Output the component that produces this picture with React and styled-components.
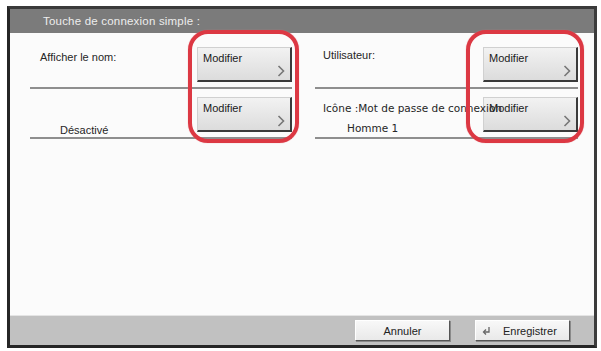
import React from 'react'
import styled, { createGlobalStyle } from 'styled-components'

const GlobalStyle = createGlobalStyle`
  body {
    margin: 0;
    background: #ffffff;
    font-family: "Liberation Sans", Arial, sans-serif;
  }
`

const Page = styled.div`
  width: 601px;
  height: 351px;
  box-sizing: border-box;
  padding: 6px 4px 3px 7px;
`

const Frame = styled.div`
  height: 342px;
  box-sizing: border-box;
  border: 3px solid #262626;
  border-top-color: #3a3a3a;
  border-right-color: #3c3c3c;
  display: flex;
  flex-direction: column;
`

const TitleBar = styled.div`
  height: 24px;
  flex: none;
  background: #7b7b7b;
  color: #ededed;
  font-size: 11.5px;
  letter-spacing: 0.2px;
  line-height: 24px;
  padding-left: 33px;
`

const Content = styled.div`
  flex: 1;
  position: relative;
  background: #fbfbfb;
  display: grid;
  grid-template-columns: 262px 263px;
  column-gap: 23px;
  align-content: start;
  padding-left: 20px;
`

const Column = styled.div`
  display: flex;
  flex-direction: column;
`

const Row = styled.div`
  height: ${(p) => p.$height}px;
  box-sizing: border-box;
  display: flex;
  justify-content: space-between;
  align-items: flex-end;
  padding-bottom: 5px;
  border-bottom: 2px solid #8e8e8e;
`

const TextCell = styled.div`
  align-self: stretch;
  flex: 1;
  min-width: 0;
  position: relative;
  z-index: 1;
  padding-top: ${(p) => p.$top}px;
  padding-left: ${(p) => p.$left}px;
  white-space: nowrap;
`

const Label = styled.div`
  font-size: 11px;
  line-height: 14px;
  height: 14px;
  color: #262626;
`

const AltLabel = styled(Label)`
  font-family: "DejaVu Sans", Verdana, sans-serif;
  font-size: 10.5px;
`

const Value = styled(Label)`
  margin-top: ${(p) => p.$gap}px;
  padding-left: ${(p) => p.$indent}px;
`

const AltValue = styled(AltLabel)`
  margin-top: ${(p) => p.$gap}px;
  padding-left: ${(p) => p.$indent}px;
`

const EditButton = styled.div`
  width: 95px;
  height: 35px;
  flex: none;
  box-sizing: border-box;
  display: flex;
  flex-direction: column;
  justify-content: space-between;
  padding: 4px 5px 3px 5px;
  background: linear-gradient(#f2f2f2, #dcdcdc);
  border-top: 1px solid #d0d0d0;
  border-left: 1px solid #d0d0d0;
  border-right: 2px solid #3a3a3a;
  border-bottom: 2px solid #3a3a3a;
  font-size: 11px;
  color: #1a1a1a;
  svg {
    align-self: flex-end;
  }
`

const Ring = styled.div`
  position: absolute;
  top: -3px;
  left: ${(p) => p.$left}px;
  width: ${(p) => p.$width}px;
  height: 113px;
  box-sizing: border-box;
  border: 4px solid #dc3843;
  border-radius: 20px;
  box-shadow: 0 0 1px #e58088;
  pointer-events: none;
  z-index: 2;
`

const Footer = styled.div`
  height: 30px;
  flex: none;
  box-sizing: border-box;
  background: #c1c1c1;
  border-top: 1px solid #e4e4e4;
  display: flex;
  justify-content: flex-end;
  align-items: center;
  gap: 25px;
  padding-right: 24px;
`

const FooterButton = styled.div`
  width: 95px;
  height: 21px;
  box-sizing: border-box;
  display: flex;
  align-items: center;
  justify-content: ${(p) => (p.$icon ? 'flex-start' : 'center')};
  gap: 12px;
  padding-left: ${(p) => (p.$icon ? 6 : 0)}px;
  background: linear-gradient(#f8f8f8, #e9e9e9);
  border: 1px solid;
  border-color: #ffffff #555 #555 #ffffff;
  box-shadow: 1px 1px 0 #8a8a8a;
  font-size: 11px;
  color: #222;
`

const Chevron = () => (
  <svg width="8" height="12" viewBox="0 0 8 12">
    <path d="M1.5 1 L6.5 6 L1.5 11" fill="none" stroke="#777" strokeWidth="1.6" />
  </svg>
)

const ReturnIcon = () => (
  <svg width="9" height="9" viewBox="0 0 9 9">
    <path d="M7 1 V6 H2" fill="none" stroke="#666" strokeWidth="1.3" />
    <path d="M4 3.5 L1.5 6 L4 8.5" fill="none" stroke="#666" strokeWidth="1.3" />
  </svg>
)

const Modify = () => (
  <EditButton>
    Modifier
    <Chevron />
  </EditButton>
)

const App = () => (
  <Page>
    <GlobalStyle />
    <Frame>
      <TitleBar>Touche de connexion simple :</TitleBar>
      <Content>
        <Column>
          <Row $height={56}>
            <TextCell $top={17} $left={10}>
              <Label>Afficher le nom:</Label>
            </TextCell>
            <Modify />
          </Row>
          <Row $height={50}>
            <TextCell $top={14} $left={10}>
              <Label />
              <Value $gap={6} $indent={20}>Désactivé</Value>
            </TextCell>
            <Modify />
          </Row>
        </Column>
        <Column>
          <Row $height={56}>
            <TextCell $top={15} $left={8}>
              <Label>Utilisateur:</Label>
            </TextCell>
            <Modify />
          </Row>
          <Row $height={50}>
            <TextCell $top={12} $left={8}>
              <AltLabel>Icône :Mot de passe de connexion</AltLabel>
              <AltValue $gap={6} $indent={24}>Homme 1</AltValue>
            </TextCell>
            <Modify />
          </Row>
        </Column>
        <Ring $left={178} $width={111} />
        <Ring $left={456} $width={118} />
      </Content>
      <Footer>
        <FooterButton>Annuler</FooterButton>
        <FooterButton $icon>
          <ReturnIcon />
          Enregistrer
        </FooterButton>
      </Footer>
    </Frame>
  </Page>
)

export default App
